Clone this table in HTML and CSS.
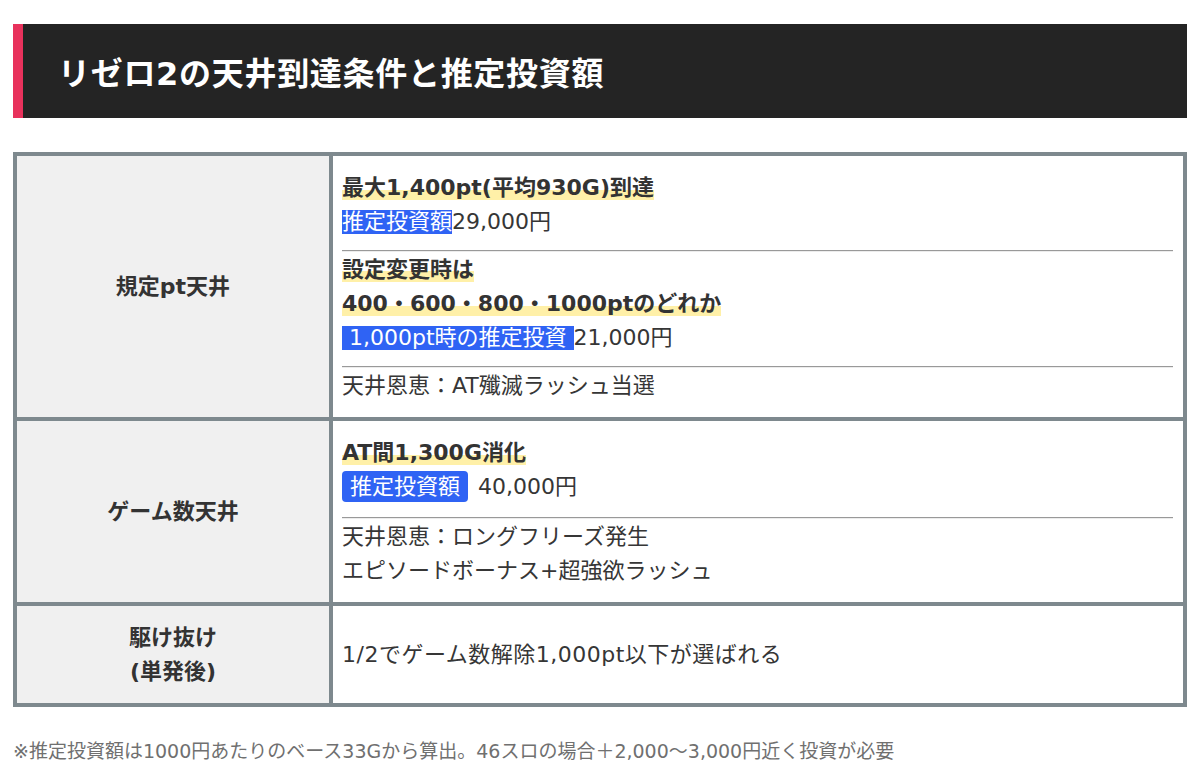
FILE: index.html
```html
<!DOCTYPE html>
<html lang="ja">
<head>
<meta charset="utf-8">
<title>リゼロ2の天井到達条件と推定投資額</title>
<link rel="stylesheet" href="styles.css">
</head>
<body>
<div class="page">
  <h2 class="heading">リゼロ2の天井到達条件と推定投資額</h2>
  <table class="spec">
    <tr class="row-pt">
      <th class="label">規定pt天井</th>
      <td class="content">
        <div class="block">
          <span class="marker">最大1,400pt(平均930G)到達</span><br>
          <span class="hl">推定投資額</span>29,000円
        </div>
        <hr class="rule">
        <div class="block">
          <span class="marker">設定変更時は<br>400・600・800・1000ptのどれか</span><br>
          <span class="hl"> 1,000pt時の推定投資 </span>21,000円
        </div>
        <hr class="rule">
        <div class="block">天井恩恵：AT殲滅ラッシュ当選</div>
      </td>
    </tr>
    <tr class="row-game">
      <th class="label">ゲーム数天井</th>
      <td class="content">
        <div class="block">
          <span class="marker">AT間1,300G消化</span><br>
          <span class="badge">推定投資額</span>40,000円
        </div>
        <hr class="rule rule-wide">
        <div class="block">天井恩恵：ロングフリーズ発生<br>エピソードボーナス+超強欲ラッシュ</div>
      </td>
    </tr>
    <tr class="row-single">
      <th class="label">駆け抜け<br>(単発後)</th>
      <td class="content">1/2でゲーム数解除1,000pt以下が選ばれる</td>
    </tr>
  </table>
  <p class="note">※推定投資額は1000円あたりのベース33Gから算出。46スロの場合＋2,000〜3,000円近く投資が必要</p>
</div>
</body>
</html>
```

FILE: styles.css
```css
html, body {
  margin: 0;
  padding: 0;
  background: #ffffff;
}

body {
  font-family: "DejaVu Sans", "Noto Sans CJK JP", sans-serif;
  color: #333333;
}

.page {
  padding: 24px 13px 0;
}

.heading {
  margin: 0;
  height: 94px;
  display: flex;
  align-items: center;
  background: #242424;
  border-left: 10px solid #e8325c;
  padding-left: 35px;
  color: #ffffff;
  font-size: 32px;
  font-weight: bold;
  letter-spacing: 0.7px;
}

.spec {
  margin-top: 34px;
  width: 1174px;
  border-spacing: 4px;
  background: #7e898e;
  font-size: 22px;
  line-height: 34px;
}

.label {
  width: 312px;
  background: #f0f0f0;
  color: #333333;
  font-weight: bold;
  text-align: center;
  vertical-align: middle;
  padding: 15px 0 14px;
}

.content {
  background: #ffffff;
  color: #363636;
  vertical-align: middle;
  text-align: left;
  padding: 15px 10px 14px 9px;
}

.row-single .content {
  letter-spacing: 0.5px;
}

.block {
  margin: 0;
}

.marker {
  font-weight: bold;
  color: #333333;
  background: linear-gradient(transparent 58%, #fff0a8 58%);
}

.hl {
  display: inline-block;
  background: #2f63f4;
  color: #ffffff;
  line-height: 24px;
  white-space: pre;
}

.badge {
  display: inline-block;
  background: #2f63f4;
  color: #ffffff;
  line-height: 31px;
  padding: 0 8px;
  border-radius: 4px;
  margin-right: 10px;
}

.rule {
  margin: 11px 0 1px;
  height: 0;
  border: 0;
  border-top: 1px solid #999999;
  border-bottom: 1px solid #ececec;
}

.rule-wide {
  margin-top: 13px;
}

.note {
  margin: 30px 0 0;
  font-size: 19px;
  line-height: 28px;
  color: #707070;
}
```
